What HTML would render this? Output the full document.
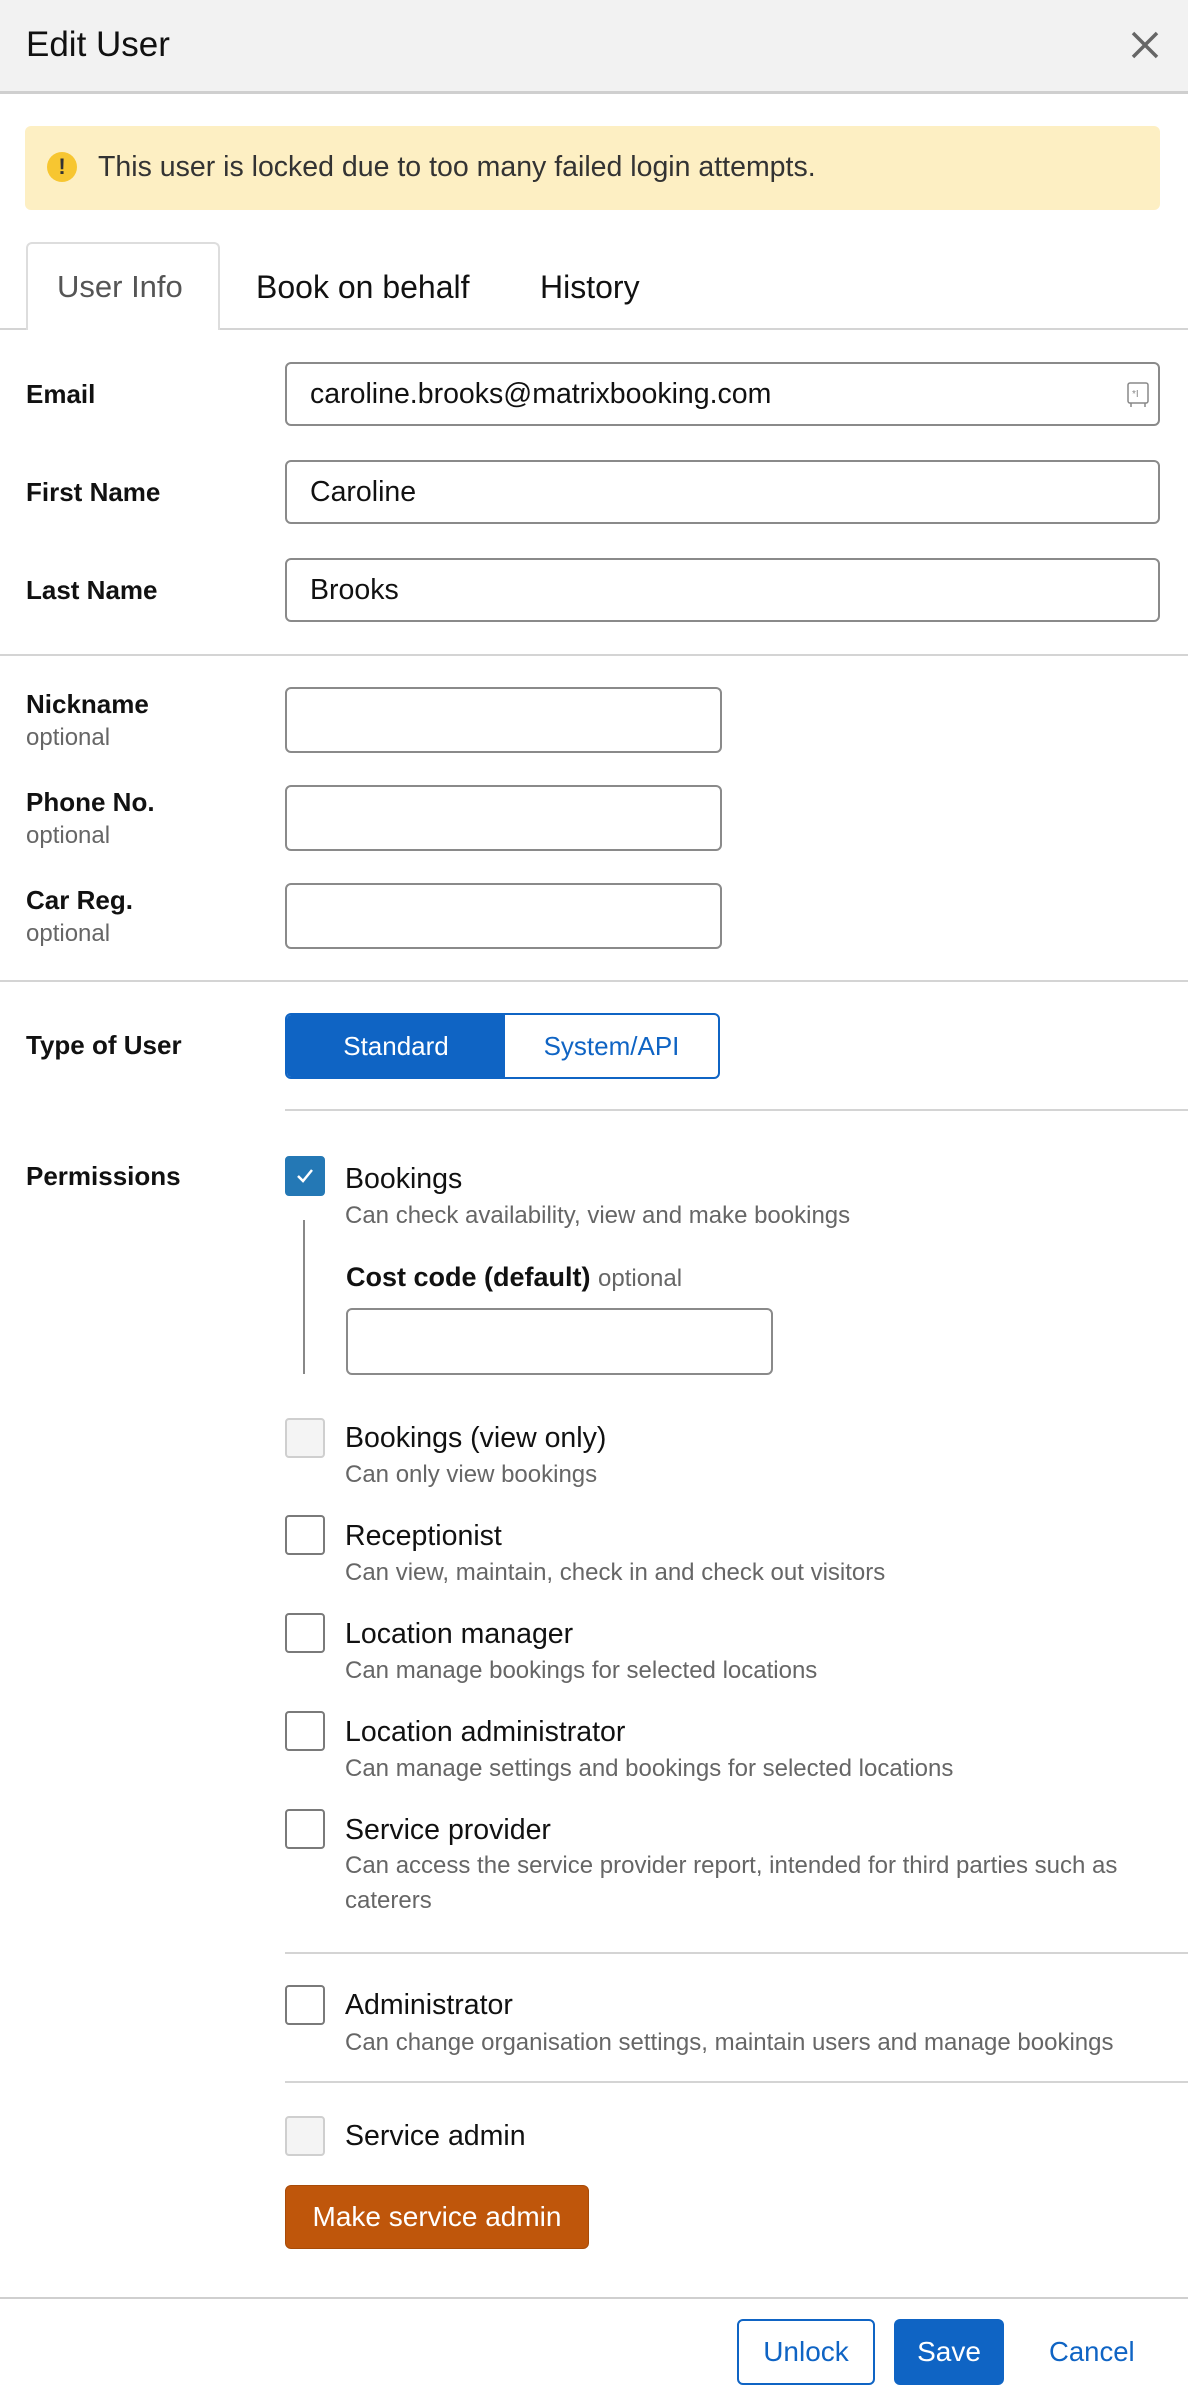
<!DOCTYPE html>
<html><head><meta charset="utf-8"><style>
*{box-sizing:border-box;margin:0;padding:0}
body{width:1188px;height:2404px;position:relative;background:#fff;font-family:"Liberation Sans",Arial,sans-serif;color:#111;overflow:hidden}
.a{position:absolute;white-space:nowrap}
.t{line-height:40px;height:40px}
.lbl{font-size:26px;font-weight:bold}
.opt{font-size:24px;color:#666}
.txt{font-size:28.5px}
.desc{font-size:24px;color:#666}
.inp{position:absolute;border:2px solid #8a8a8a;border-radius:6px;background:#fff}
.hr{position:absolute;height:2px;background:#d4d4d4;right:0}
.cb{position:absolute;width:40px;height:40px;border:2px solid #7a7a7a;border-radius:4px;background:#fff;left:285px}
.cb.dis{border-color:#cfcfcf;background:#f4f4f4}
</style></head><body>
<div class="a" style="left:0;top:0;width:1188px;height:94px;background:#f2f2f2;border-bottom:3px solid #cfcfcf"></div>
<div class="a t" style="left:26px;top:25px;font-size:35px">Edit User</div>
<svg class="a" style="left:1130px;top:30px" width="30" height="30" viewBox="0 0 30 30"><path d="M3 3L27 27M27 3L3 27" stroke="#666" stroke-width="3.5"/></svg>

<div class="a" style="left:25px;top:126px;width:1135px;height:84px;background:#fdefc3;border-radius:6px"></div>
<div class="a" style="left:47px;top:152px;width:30px;height:30px;border-radius:50%;background:#f7c631;color:#333;font-weight:bold;font-size:22px;text-align:center;line-height:30px">!</div>
<div class="a t" style="left:98px;top:147px;font-size:28.5px;color:#333">This user is locked due to too many failed login attempts.</div>

<div class="a" style="left:26px;top:242px;width:194px;height:88px;border:2px solid #ddd;border-bottom:none;border-radius:6px 6px 0 0;background:#fff;z-index:2"></div>
<div class="hr" style="left:0;top:328px"></div>
<div class="a t" style="left:57px;top:267px;font-size:31px;color:#555;z-index:3">User Info</div>
<div class="a t" style="left:256px;top:267px;font-size:32px">Book on behalf</div>
<div class="a t" style="left:540px;top:267px;font-size:32px">History</div>

<div class="a t lbl" style="left:26px;top:374px">Email</div>
<div class="inp" style="left:285px;top:362px;width:875px;height:64px"></div>
<div class="a t txt" style="left:310px;top:374px">caroline.brooks@matrixbooking.com</div>
<svg class="a" style="left:1126px;top:381px" width="24" height="28" viewBox="0 0 24 28"><rect x="2" y="2" width="20" height="20" rx="2" fill="none" stroke="#888" stroke-width="1.5"/><path d="M5 22v4M19 22v4" stroke="#888" stroke-width="1.5"/><text x="6" y="16" font-size="10" fill="#888" font-family="Liberation Sans">*I</text></svg>
<div class="a t lbl" style="left:26px;top:472px">First Name</div>
<div class="inp" style="left:285px;top:460px;width:875px;height:64px"></div>
<div class="a t txt" style="left:310px;top:472px">Caroline</div>
<div class="a t lbl" style="left:26px;top:570px">Last Name</div>
<div class="inp" style="left:285px;top:558px;width:875px;height:64px"></div>
<div class="a t txt" style="left:310px;top:570px">Brooks</div>
<div class="hr" style="left:0;top:654px"></div>

<div class="a t lbl" style="left:26px;top:684px">Nickname</div><div class="a t opt" style="left:26px;top:718px">optional</div>
<div class="inp" style="left:285px;top:687px;width:437px;height:66px"></div>
<div class="a t lbl" style="left:26px;top:782px">Phone No.</div><div class="a t opt" style="left:26px;top:816px">optional</div>
<div class="inp" style="left:285px;top:785px;width:437px;height:66px"></div>
<div class="a t lbl" style="left:26px;top:880px">Car Reg.</div><div class="a t opt" style="left:26px;top:914px">optional</div>
<div class="inp" style="left:285px;top:883px;width:437px;height:66px"></div>
<div class="hr" style="left:0;top:980px"></div>

<div class="a t lbl" style="left:26px;top:1025px">Type of User</div>
<div class="a" style="left:285px;top:1013px;width:435px;height:66px;border:2px solid #0f64c4;border-radius:6px;overflow:hidden;display:flex">
<div style="width:218px;background:#0f64c4;color:#fff;font-size:26px;text-align:center;line-height:62px">Standard</div>
<div style="flex:1;color:#0f64c4;font-size:26px;text-align:center;line-height:62px">System/API</div></div>
<div class="hr" style="left:285px;top:1109px"></div>

<div class="a t lbl" style="left:26px;top:1156px">Permissions</div>
<div class="cb" style="top:1156px;background:#2478b5;border-color:#2478b5"><svg width="36" height="36" viewBox="0 0 36 36"><path d="M11 18l5 5 9-11" fill="none" stroke="#fff" stroke-width="2.5"/></svg></div>
<div class="a t txt" style="left:345px;top:1159px">Bookings</div>
<div class="a t desc" style="left:345px;top:1196px">Can check availability, view and make bookings</div>
<div class="a" style="left:303px;top:1220px;width:2px;height:154px;background:#888"></div>
<div class="a t" style="left:346px;top:1257px;font-size:27px;font-weight:bold">Cost code (default) <span style="font-weight:normal;font-size:24px;color:#666">optional</span></div>
<div class="inp" style="left:346px;top:1308px;width:427px;height:67px"></div>

<div class="cb dis" style="top:1418px"></div>
<div class="a t txt" style="left:345px;top:1418px">Bookings (view only)</div>
<div class="a t desc" style="left:345px;top:1455px">Can only view bookings</div>
<div class="cb" style="top:1515px"></div>
<div class="a t txt" style="left:345px;top:1516px">Receptionist</div>
<div class="a t desc" style="left:345px;top:1553px">Can view, maintain, check in and check out visitors</div>
<div class="cb" style="top:1613px"></div>
<div class="a t txt" style="left:345px;top:1614px">Location manager</div>
<div class="a t desc" style="left:345px;top:1651px">Can manage bookings for selected locations</div>
<div class="cb" style="top:1711px"></div>
<div class="a t txt" style="left:345px;top:1712px">Location administrator</div>
<div class="a t desc" style="left:345px;top:1749px">Can manage settings and bookings for selected locations</div>
<div class="cb" style="top:1809px"></div>
<div class="a t txt" style="left:345px;top:1810px">Service provider</div>
<div class="a t desc" style="left:345px;top:1846px">Can access the service provider report, intended for third parties such as</div>
<div class="a t desc" style="left:345px;top:1881px">caterers</div>
<div class="hr" style="left:285px;top:1952px"></div>
<div class="cb" style="top:1985px"></div>
<div class="a t txt" style="left:345px;top:1985px">Administrator</div>
<div class="a t desc" style="left:345px;top:2023px">Can change organisation settings, maintain users and manage bookings</div>
<div class="hr" style="left:285px;top:2081px"></div>
<div class="cb dis" style="top:2116px"></div>
<div class="a t txt" style="left:345px;top:2116px">Service admin</div>
<div class="a" style="left:285px;top:2185px;width:304px;height:64px;background:#bf560b;border:1px solid #a84b08;border-radius:6px;color:#fff;font-size:28px;text-align:center;line-height:62px">Make service admin</div>

<div class="a" style="left:0;top:2297px;width:1188px;height:2px;background:#cfcfcf"></div>
<div class="a" style="left:737px;top:2319px;width:138px;height:66px;border:2px solid #0f64c4;border-radius:6px;color:#0f64c4;font-size:28px;text-align:center;line-height:62px">Unlock</div>
<div class="a" style="left:894px;top:2319px;width:110px;height:66px;background:#0f64c4;border-radius:6px;color:#fff;font-size:28px;text-align:center;line-height:66px">Save</div>
<div class="a" style="left:1049px;top:2319px;height:66px;color:#0f64c4;font-size:27.5px;line-height:66px">Cancel</div>
</body></html>
